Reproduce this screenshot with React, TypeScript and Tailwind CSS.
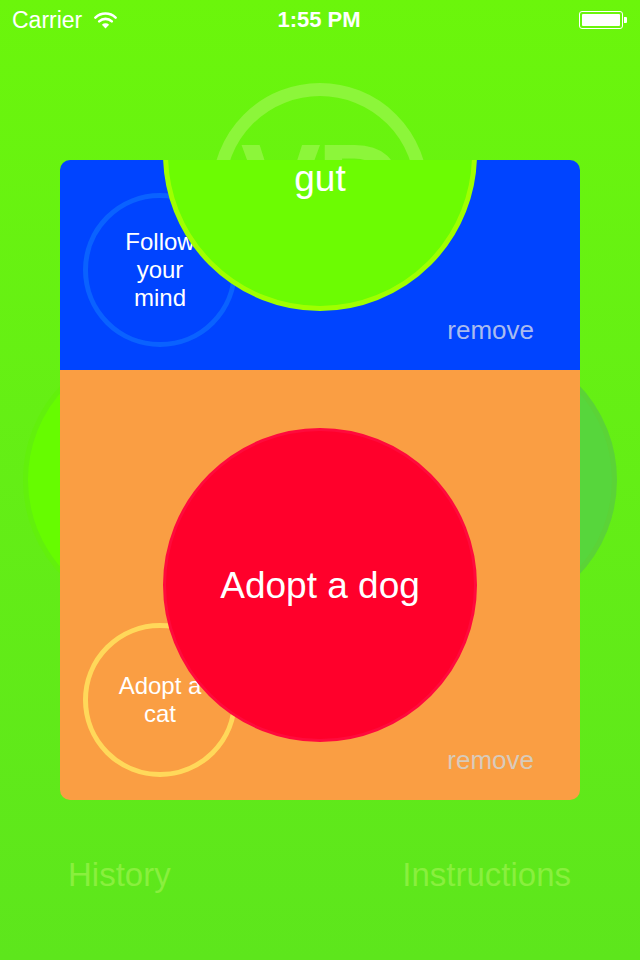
const font = { fontFamily: '"Liberation Sans", Arial, sans-serif' };

const StatusBar = () => {
	return (
		<div className="relative z-20 h-10 flex items-center px-3 text-white">
			<div className="flex items-center gap-[12px] w-[200px]">
				<span className="text-[23px] leading-none">Carrier</span>
				<svg width="23" height="18" viewBox="0 0 23 18" fill="none">
					<path d="M1.4 6.6 A14.5 14.5 0 0 1 21.6 6.6" stroke="white" strokeWidth="2.6" strokeLinecap="round" />
					<path d="M5.2 10.4 A9.2 9.2 0 0 1 17.8 10.4" stroke="white" strokeWidth="2.6" strokeLinecap="round" />
					<path d="M11.5 17.4 L7.9 13.8 A5.1 5.1 0 0 1 15.1 13.8 Z" fill="white" />
				</svg>
			</div>
			<div className="flex-1 text-center text-[22px] font-semibold leading-none pr-[2px]">1:55 PM</div>
			<div className="w-[200px] flex justify-end items-center pr-[1px]">
				<div className="w-[44px] h-[18px] rounded-[3px] border border-white p-[2px]">
					<div className="w-full h-full bg-white rounded-[1px]"></div>
				</div>
				<div className="w-[3px] h-[6px] bg-white rounded-r-[1px] ml-[1px]"></div>
			</div>
		</div>
	);
};

const Backdrop = () => {
	return (
		<>
			<div className="absolute left-[23px] top-[342px] w-[276px] h-[276px] rounded-full bg-[#66fc00] border-[5px] border-[#62f00c]"></div>
			<div className="absolute left-[341px] top-[342px] w-[276px] h-[276px] rounded-full bg-[#57d63c] border-[5px] border-[#5bd337]"></div>
			<div className="absolute left-[212px] top-[83px] w-[216px] h-[216px] rounded-full border-[13px] border-[#8cf63a]"></div>
			<div className="absolute left-0 top-[126px] w-full text-center text-[120px] font-bold leading-none tracking-[-4px] text-[#8cf63a]">
				VD
			</div>
		</>
	);
};

const Bubble = ({
	className,
	lines,
	textSize,
}: {
	className: string;
	lines: string[];
	textSize: string;
}) => {
	return (
		<div className={"absolute rounded-full flex flex-col items-center justify-center text-white text-center " + className}>
			{lines.map((line, index) => (
				<span key={index} className={textSize}>
					{line}
				</span>
			))}
		</div>
	);
};

export default function App() {
	return (
		<div
			style={font}
			className="relative w-[640px] h-[960px] overflow-hidden bg-linear-to-b from-[#6bf60b] to-[#5de61c]"
		>
			<StatusBar />
			<Backdrop />

			<div className="relative z-10 mx-auto mt-[120px] w-[520px] h-[640px] rounded-[10px] overflow-hidden flex flex-col">
				<div className="relative h-[210px] overflow-hidden bg-[#0044ff] flex flex-col justify-end items-end pr-[46px] pb-[27px]">
					<span className="text-[26px] leading-none text-[#a9bbef]">remove</span>
					<Bubble
						className="left-[23px] top-[33px] w-[154px] h-[154px] border-[5px] border-[#0a62ff]"
						lines={["Follow", "your", "mind"]}
						textSize="text-[24px] leading-[28px]"
					/>
					<div className="absolute left-[103px] top-[-163px] w-[314px] h-[314px] rounded-full bg-[#6cfc02] border-[5px] border-[#9fff00] flex flex-col items-center pt-[158px]">
						<span className="text-[37px] leading-none text-white">gut</span>
					</div>
				</div>

				<div className="relative flex-1 overflow-hidden bg-[#fa9e43] flex flex-col justify-end items-end pr-[46px] pb-[27px]">
					<span className="text-[26px] leading-none text-[#d8cbbb]">remove</span>
					<Bubble
						className="left-[23px] top-[253px] w-[154px] h-[154px] border-[5px] border-[#ffd85a]"
						lines={["Adopt a", "cat"]}
						textSize="text-[24px] leading-[28px]"
					/>
					<Bubble
						className="left-[103px] top-[58px] w-[314px] h-[314px] bg-[#ff002b] border-[3px] border-[#ff0a3c]"
						lines={["Adopt a dog"]}
						textSize="text-[37px] leading-none"
					/>
				</div>
			</div>

			<div className="flex justify-between pl-[68px] pr-[69px] mt-[58px] text-[33px] leading-none text-[#89ef3e]">
				<span>History</span>
				<span>Instructions</span>
			</div>
		</div>
	);
}
